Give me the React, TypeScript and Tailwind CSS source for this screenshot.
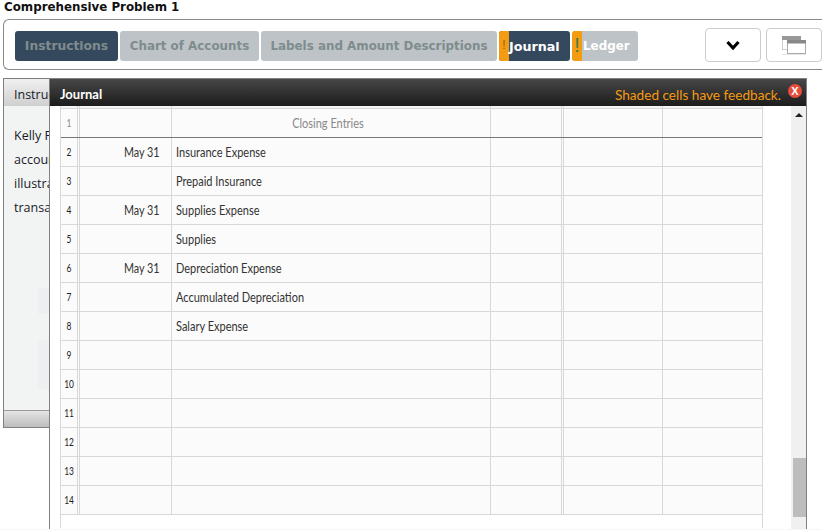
import { Fragment } from "react";

const rows = [
  { n: 2, date: "May 31", name: "Insurance Expense" },
  { n: 3, date: "", name: "Prepaid Insurance" },
  { n: 4, date: "May 31", name: "Supplies Expense" },
  { n: 5, date: "", name: "Supplies" },
  { n: 6, date: "May 31", name: "Depreciation Expense" },
  { n: 7, date: "", name: "Accumulated Depreciation" },
  { n: 8, date: "", name: "Salary Expense" },
  { n: 9, date: "", name: "" },
  { n: 10, date: "", name: "" },
  { n: 11, date: "", name: "" },
  { n: 12, date: "", name: "" },
  { n: 13, date: "", name: "" },
  { n: 14, date: "", name: "" },
];

const cols = "grid grid-cols-[16px_3px_92px_319px_71px_2px_99px_99px]";

function Cells({ n, date, name, head }: { n?: number; date?: string; name?: string; head?: boolean }) {
  return (
    <Fragment>
      <div className={`flex items-center justify-center pt-px text-[10.5px] ${head ? "text-[#888]" : "text-[#222]"}`}>
        <span className="inline-block scale-x-[0.8] whitespace-nowrap">{n}</span>
      </div>
      <div className="border-x border-[#d8d8d8]" />
      <div className="flex items-center justify-end border-r border-[#d8d8d8] pr-[11px] pt-px">
        <span className="inline-block origin-right scale-x-[0.8] whitespace-nowrap">{date}</span>
      </div>
      <div className={`flex items-center border-r border-[#d8d8d8] pt-px ${head ? "justify-center pr-[7px] text-[#888]" : "pl-[4px]"}`}>
        <span className={`inline-block scale-x-[0.815] whitespace-nowrap ${head ? "" : "origin-left"}`}>{name}</span>
      </div>
      <div className="border-r border-[#d8d8d8]" />
      <div className="border-r border-[#d8d8d8]" />
      <div className="border-r border-[#d8d8d8]" />
      <div />
    </Fragment>
  );
}

export default function App() {
  return (
    <div className="relative h-[530px] w-[822px] overflow-hidden bg-white font-['DejaVu_Sans',sans-serif]">
      <div className="h-[19px] pl-[4px] pt-px text-[11.85px] font-bold leading-[13px] text-[#111]">Comprehensive Problem 1</div>

      <div className="ml-[3px] flex h-[51px] items-center rounded-l-[6px] border border-r-0 border-[#8a8a8a] pl-[11px] font-bold">
        <div className="mt-[2px] flex gap-[2px] text-[11.9px] leading-[15px]">
          <div className="flex h-[30px] w-[103px] items-center justify-center rounded-[3px] bg-[#34495e] pt-px text-[12.3px] text-[#7f8c8d]">Instructions</div>
          <div className="flex h-[30px] w-[139px] items-center justify-center rounded-[3px] bg-[#bdc3c7] pt-px text-[#7f8c8d]">Chart of Accounts</div>
          <div className="flex h-[30px] w-[236px] items-center justify-center rounded-[3px] bg-[#bdc3c7] pt-px text-[#7f8c8d]">Labels and Amount Descriptions</div>
          <div className="flex h-[30px] w-[71px] items-center overflow-hidden rounded-[3px] bg-[#34495e] text-[12.7px] text-white">
            <div className="flex h-full w-[10px] shrink-0 items-center justify-center bg-[#f39c12] font-['Liberation_Sans',sans-serif] text-[12px] font-normal text-[#96640f]">!</div>
            <span className="pt-px">Journal</span>
          </div>
          <div className="flex h-[30px] w-[66px] items-center overflow-hidden rounded-[3px] bg-[#bdc3c7] text-white">
            <div className="flex h-full w-[10px] shrink-0 items-center justify-center bg-[#f39c12] font-['Liberation_Sans',sans-serif] text-[20px] font-normal text-[#3f7a4a]">!</div>
            <span className="pl-px pt-px">Ledger</span>
          </div>
        </div>
        <div className="ml-[67px] flex h-[34px] w-[56px] items-center justify-center rounded-[4px] border border-[#ccc] bg-white pt-[2px]">
          <svg width="14" height="11" viewBox="0 0 14 11">
            <path d="M1.5 2 L7 8 L12.5 2" fill="none" stroke="#000" strokeWidth="3.2" />
          </svg>
        </div>
        <div className="ml-[5px] flex h-[34px] w-[56px] items-center justify-center rounded-[4px] border border-[#ccc] bg-white pt-[2px]">
          <svg width="24" height="19" viewBox="0 0 24 19">
            <rect x="0.5" y="0.5" width="18" height="13" fill="#fff" stroke="#ccc" />
            <rect x="0" y="0" width="19" height="4" fill="#999" />
            <rect x="5.5" y="4.5" width="18" height="13" fill="#fff" stroke="#aaa" />
            <rect x="5" y="4" width="19" height="3.5" fill="#888" />
            <path d="M0 18.5 H24" stroke="#e6e6e6" />
          </svg>
        </div>
      </div>

      <div className="relative ml-[3px] mt-[8px] flex h-[350px] w-[60px] flex-col overflow-hidden border border-r-0 border-[#808080] bg-[#f2f4f4] font-['Open_Sans',sans-serif] text-[12.5px] text-[#1a1a2a]">
        <div className="flex h-[27px] shrink-0 items-center bg-gradient-to-b from-[#f0f0f0] to-[#cfcfcf] pl-[10px] pt-[5px]">Instructions</div>
        <div className="flex-1 whitespace-nowrap pl-[10px] pt-[18px] leading-[24px]">
          <div>Kelly Farm</div>
          <div>accounts</div>
          <div>illustrated</div>
          <div>transactions</div>
        </div>
        <div className="absolute left-[34px] top-[209px] h-[26px] w-[11px] bg-[#eeeff0]" />
        <div className="absolute left-[34px] top-[261px] h-[49px] w-[11px] bg-[#eeeff0]" />
        <div className="h-[17px] shrink-0 border-t border-[#999] bg-gradient-to-b from-[#e4e4e4] to-[#bdbdbd]" />
      </div>

      <div className="absolute bottom-0 left-0 h-px w-full bg-[#f6f6f6]" />

      <div className="absolute bottom-[1px] left-[49px] top-[78px] w-[758px] border-x border-t border-[#808080] bg-white">
        <div className="flex h-[27px] items-center justify-between bg-gradient-to-b from-[#484848] to-[#1c1c1c] pl-[10px] pr-[25px] pt-[5px] font-['Lato',sans-serif] text-[13.6px]">
          <span className="text-[13px] font-bold text-white">Journal</span>
          <span className="text-[#f39c12]">Shaded cells have feedback.</span>
        </div>
        <div className="absolute right-[4px] top-[5px] flex h-[14px] w-[14px] items-center justify-center rounded-full bg-[#e74c3c] font-['Liberation_Sans',sans-serif] text-[11px] font-bold text-white">
          X
        </div>

        <div className="ml-[10px] h-[422px] w-[703px] border-x border-[#d8d8d8] font-['Lato',sans-serif] text-[13.5px] leading-none text-[#333]">
          <div className={`${cols} h-[3px] border-b border-[#d8d8d8] bg-[#f4f4f4]`}>
            <Cells />
          </div>
          <div className={`${cols} h-[29px] border-b border-[#777] bg-[#fbfbfb]`}>
            <Cells n={1} name="Closing Entries" head />
          </div>
          {rows.map((r) => (
            <div key={r.n} className={`${cols} h-[29px] border-b border-[#d8d8d8] bg-[#fbfbfb]`}>
              <Cells n={r.n} date={r.date} name={r.name} />
            </div>
          ))}
        </div>

        {/* scrollbar */}
        <div className="absolute bottom-0 right-0 top-[27px] w-[15px] bg-[#f0f0f0]">
          <div className="absolute left-[4px] top-[7px] h-0 w-0 border-x-[4px] border-b-[4px] border-x-transparent border-b-[#222]" />
          <div className="absolute right-0 top-[352px] h-[59px] w-[13px] bg-[#bdbdbd]" />
        </div>
      </div>
    </div>
  );
}
